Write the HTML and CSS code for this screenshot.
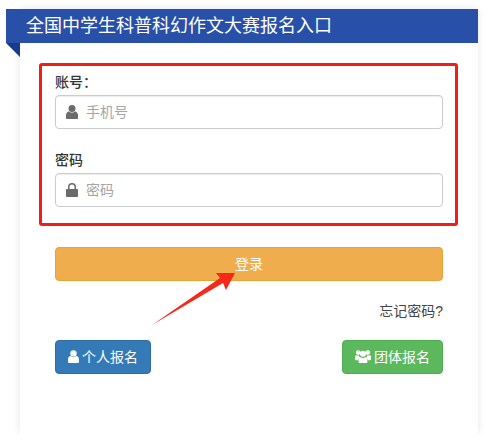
FILE: index.html
```html
<!DOCTYPE html>
<html lang="zh">
<head>
    <meta charset="UTF-8">
    <meta name="viewport" content="width=device-width, initial-scale=1.0">
    <title>全国中学生科普科幻作文大赛报名入口</title>
    <link rel="stylesheet" href="styles.css">
</head>
<body>
    <div class="card">
        <div class="card-title">全国中学生科普科幻作文大赛报名入口</div>
        <div class="fold"></div>
        <form class="login-form">
            <div class="highlight">
                <label class="field-label" for="account">账号：</label>
                <div class="input-group">
                    <svg class="input-icon" viewBox="0 0 12 14"><circle cx="6" cy="3.600" r="3.500"/><path d="M0 13V10c0-2 1.300-3.400 3-3.600C3.800 7.200 4.900 7.600 6 7.600s2.200-.4 3-1.200c1.700.2 3 1.600 3 3.600v3c0 .6-.4 1-1 1H1c-.6 0-1-.4-1-1z"/></svg>
                    <input type="text" id="account" placeholder="手机号">
                </div>
                <label class="field-label second" for="password">密码</label>
                <div class="input-group">
                    <svg class="input-icon" viewBox="0 0 12 14"><path d="M2 6V4a4 4 0 0 1 8 0v2h1c.6 0 1 .4 1 1v6c0 .6-.4 1-1 1H1c-.6 0-1-.4-1-1V7c0-.6.400-1 1-1zm1.500 0h5V4a2.500 2.500 0 0 0-5 0z"/></svg>
                    <input type="password" id="password" placeholder="密码">
                </div>
            </div>
            <div class="form-body">
                <button type="button" class="btn btn-login">登录</button>
                <div class="forgot">忘记密码?</div>
                <div class="btn-row">
                    <button type="button" class="btn btn-single">
                        <svg class="btn-icon" viewBox="0 0 12 14"><circle cx="6" cy="3.600" r="3.500"/><path d="M0 13V10c0-2 1.300-3.400 3-3.600C3.800 7.200 4.900 7.600 6 7.600s2.200-.4 3-1.200c1.700.2 3 1.600 3 3.600v3c0 .6-.4 1-1 1H1c-.6 0-1-.4-1-1z"/></svg>
                        个人报名
                    </button>
                    <button type="button" class="btn btn-team">
                        <svg class="btn-icon wide" viewBox="0 0 17 14"><circle cx="3.400" cy="2.800" r="2.600"/><circle cx="13.600" cy="2.800" r="2.600"/><circle cx="8.500" cy="4" r="3.300"/><path d="M0 6h4c.2 1 .7 1.700 1.400 2.300-1.200.4-2 1.400-2.200 2.700H.8c-.5 0-.8-.3-.8-.8zM17 6h-4c-.2 1-.7 1.700-1.400 2.300 1.200.4 2 1.400 2.200 2.700h2.400c.5 0 .8-.3.800-.8zM6 7.900c.7.500 1.500.8 2.500.8s1.800-.3 2.500-.8c1.400.3 2.200 1.400 2.200 2.900v2.400c0 .5-.3.800-.8.800H4.600c-.5 0-.8-.3-.8-.8v-2.400c0-1.500.8-2.600 2.200-2.900z"/></svg>
                        团体报名
                    </button>
                </div>
            </div>
        </form>
        <svg class="arrow" viewBox="0 0 90 58"><polygon points="2,55 70,8 66,3 85,3 76,20 73,13"/></svg>
    </div>
</body>
</html>
```

FILE: styles.css
```css
html, body {
    margin: 0;
    padding: 0;
}
body {
    background: #fff;
    font-family: "Liberation Sans", "Noto Sans CJK SC", sans-serif;
    color: #444;
    font-size: 14px;
}
* {
    box-sizing: border-box;
}
.card {
    position: relative;
    width: 458px;
    height: 425px;
    margin: 9px 0 0 20px;
    background: #fff;
    box-shadow: 0 0 8px rgba(0, 0, 0, 0.1);
}
.card-title {
    height: 34px;
    margin-left: -14px;
    padding-left: 20px;
    background: #2850a8;
    color: #fff;
    font-size: 18px;
    line-height: 34px;
}
.fold {
    width: 0;
    height: 0;
    margin-left: -14px;
    border-top: 14px solid #163a8c;
    border-left: 14px solid transparent;
}
.login-form {
    margin-top: 6px;
    padding-left: 19px;
}
.highlight {
    width: 419px;
    height: 163px;
    padding: 7px 12px 0 13px;
    border: 3px solid #f01e14;
    border-radius: 3px;
}
.field-label {
    display: block;
    height: 22px;
    color: #333;
    font-weight: 500;
    line-height: 18px;
}
.field-label.second {
    margin-top: 22px;
}
.input-group {
    display: flex;
    align-items: center;
    height: 34px;
    padding-left: 10px;
    border: 1px solid #ccc;
    border-radius: 4px;
    box-shadow: inset 0 1px 1px rgba(0, 0, 0, 0.075);
}
.input-icon {
    flex: none;
    width: 12px;
    height: 14px;
    fill: #6b6b6b;
}
.input-group input {
    flex: 1;
    min-width: 0;
    margin-left: 8px;
    padding: 0;
    border: 0;
    outline: none;
    background: transparent;
    font: inherit;
}
.input-group input::placeholder {
    color: #a5a5a5;
    opacity: 1;
}
.form-body {
    width: 388px;
    margin-left: 16px;
}
.btn {
    display: inline-flex;
    align-items: center;
    justify-content: center;
    gap: 3px;
    height: 34px;
    padding: 0 0 2px;
    border: 1px solid transparent;
    border-radius: 4px;
    color: #fff;
    font: inherit;
}
.btn-login {
    width: 100%;
    margin-top: 21px;
    background: #f0ad4e;
    border-color: #eea236;
}
.forgot {
    margin-top: 20px;
    height: 20px;
    line-height: 20px;
    text-align: right;
}
.btn-row {
    display: flex;
    justify-content: space-between;
    margin-top: 19px;
}
.btn-single {
    width: 96px;
    background: #337ab7;
    border-color: #2e6da4;
}
.btn-team {
    width: 101px;
    background: #5cb85c;
    border-color: #4cae4c;
}
.btn-icon {
    flex: none;
    width: 11px;
    height: 13px;
    fill: #fff;
}
.btn-icon.wide {
    width: 16px;
}
.arrow {
    position: absolute;
    left: 130px;
    top: 261px;
    width: 90px;
    height: 58px;
    fill: #f5281a;
}
```
